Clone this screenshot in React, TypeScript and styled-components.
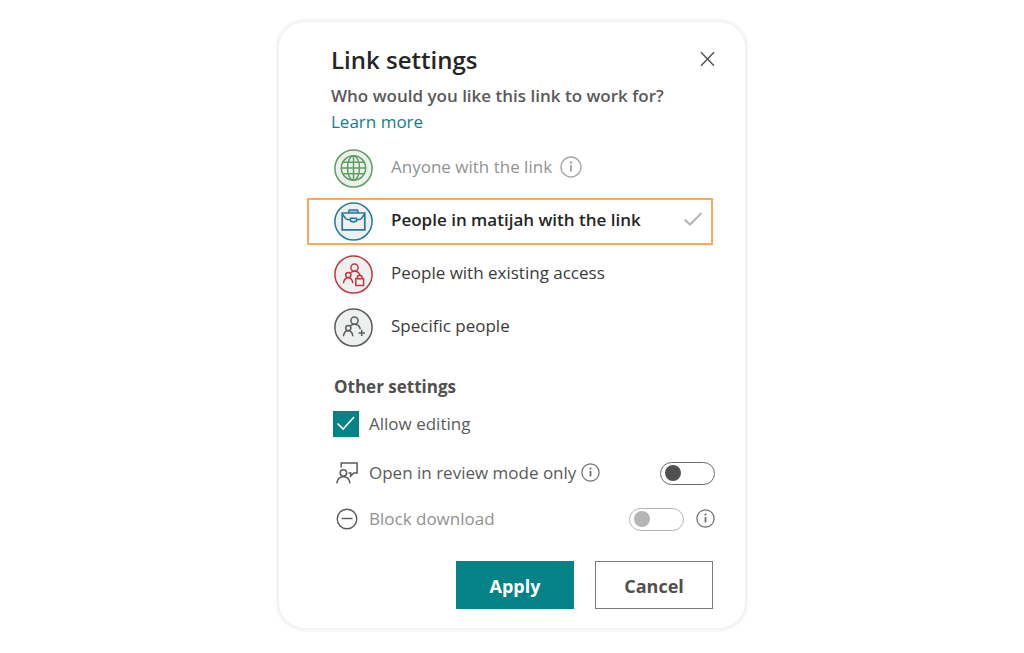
import React, { useState } from "react";
import styled, { createGlobalStyle, css } from "styled-components";

const GlobalStyle = createGlobalStyle`
  *, *::before, *::after { box-sizing: border-box; }
  body {
    margin: 0;
    background: #ffffff;
    color: #3b3b3b;
    font-family: "Open Sans", "Noto Sans", sans-serif;
    font-size: 17px;
    line-height: 26px;
  }
`;

const Page = styled.main`
  display: flex;
  justify-content: center;
  align-items: flex-start;
  padding: 22px 16px;
`;

const Dialog = styled.section`
  width: 100%;
  max-width: 466px;
  padding: 21px 30px 19px 28px;
  border-radius: 26px;
  background: #ffffff;
  box-shadow: 0 0 0 2px #f3f3f3, 0 0 3px 3px #f3f3f3;
`;

const Header = styled.header`
  display: flex;
  justify-content: space-between;
  align-items: center;
  padding-left: 24px;
  margin-bottom: 6px;
`;

const Title = styled.h1`
  margin: 0;
  font-size: 24px;
  line-height: 34px;
  font-weight: 600;
  color: #262626;
`;

const CloseButton = styled.button`
  display: flex;
  padding: 0 0 2px;
  border: 0;
  background: none;
  color: #505050;
  cursor: pointer;
`;

const Intro = styled.div`
  padding-left: 24px;
  margin-bottom: 10px;
`;

const Question = styled.p`
  margin: 0;
  font-weight: 600;
  color: #5a5a5a;
`;

const LearnMore = styled.a`
  display: block;
  width: fit-content;
  color: #117f8a;
  text-decoration: none;
`;

const Options = styled.fieldset`
  display: flex;
  flex-direction: column;
  gap: 6px;
  margin: 0 2px 23px 0;
  padding: 0;
  border: 0;
`;

const HiddenRadio = styled.input`
  appearance: none;
  width: 0;
  height: 0;
  margin: 0;
`;

const Option = styled.label<{ $selected: boolean; $muted?: boolean }>`
  display: flex;
  align-items: center;
  height: 47px;
  padding: 0 8px 0 25px;
  border: 2px solid ${(p) => (p.$selected ? "#fba85c" : "transparent")};
  color: ${(p) => (p.$muted ? "#929292" : p.$selected ? "#262626" : "#3b3b3b")};
  font-weight: ${(p) => (p.$selected ? 600 : 400)};
  cursor: pointer;
`;

const OptionText = styled.span`
  margin: 0 8px 0 18px;
  padding-bottom: 3px;
`;

const Tick = styled.span`
  display: flex;
  margin-left: auto;
  padding-bottom: 6px;
  color: #b5b5b5;
`;

const Settings = styled.section`
  padding-left: 26px;
`;

const SettingsTitle = styled.h2`
  margin: 0 0 1px 1px;
  font-size: 17px;
  line-height: 26px;
  font-weight: 700;
  color: #505050;
`;

const SettingRow = styled.div<{ $muted?: boolean; $spaced?: boolean }>`
  display: flex;
  align-items: center;
  min-height: 46px;
  margin-bottom: ${(p) => (p.$spaced ? 3 : 0)}px;
  color: ${(p) => (p.$muted ? "#929292" : "#5a5a5a")};
`;

const Leading = styled.span`
  display: flex;
  justify-content: center;
  width: 28px;
  margin-right: 8px;
  color: #5a5a5a;
`;

const Trailing = styled.span`
  display: flex;
  align-items: center;
  gap: 12px;
  margin-left: auto;
`;

const InfoButton = styled.button<{ $tone: string; $spaced?: boolean }>`
  display: flex;
  padding: 0 0 1px;
  border: 0;
  background: none;
  color: ${(p) => p.$tone};
  margin-left: ${(p) => (p.$spaced ? 5 : 0)}px;
`;

const OptionInfo = styled(InfoButton)`
  padding-bottom: 4px;
`;

const CheckboxBox = styled.span`
  display: grid;
  width: 26px;
  height: 26px;
  margin-right: 10px;

  > * { grid-area: 1 / 1; }
  > svg { pointer-events: none; z-index: 1; }
`;

const Checkbox = styled.input`
  appearance: none;
  width: 26px;
  height: 26px;
  margin: 0;
  border: 1px solid #038387;
  background: #ffffff;

  &:checked { background: #038387; }
`;

const Switch = styled.input`
  appearance: none;
  display: flex;
  align-items: center;
  width: 55px;
  height: 23px;
  margin: 0;
  padding: 0 4px;
  border: 1px solid #6a6a6a;
  border-radius: 12px;
  background: #ffffff;

  &::before {
    content: "";
    width: 16px;
    height: 16px;
    border-radius: 50%;
    background: #505050;
  }

  &:checked { justify-content: flex-end; }

  &:disabled { border-color: #b5b5b5; }
  &:disabled::before { background: #b5b5b5; }
`;

const Actions = styled.footer`
  display: flex;
  justify-content: flex-end;
  gap: 21px;
  margin: 19px 2px 0 0;
`;

const ActionButton = styled.button<{ $primary?: boolean }>`
  width: 118px;
  height: 48px;
  padding: 2px 0 0;
  font-family: inherit;
  font-size: 18px;
  line-height: 26px;
  font-weight: 700;
  cursor: pointer;
  ${(p) =>
    p.$primary
      ? css`
          border: 1px solid #038387;
          background: #038387;
          color: #ffffff;
        `
      : css`
          border: 1px solid #7a7a7a;
          background: #ffffff;
          color: #505050;
        `}
`;

function InfoIcon({ size }: { size: number }) {
  return (
    <svg width={size} height={size} viewBox="0 0 22 22" fill="none" stroke="currentColor" strokeWidth="1.4">
      <circle cx="11" cy="11" r="10" />
      <path d="M11 9.3v6.2" strokeWidth="2" />
      <circle cx="11" cy="6.5" r="1.2" fill="currentColor" stroke="none" />
    </svg>
  );
}

function Badge({ color, children }: { color: string; children: React.ReactNode }) {
  return (
    <svg width="39" height="39" viewBox="0 0 39 39" fill="none" stroke={color} strokeWidth="1.5">
      <circle cx="19.5" cy="19.5" r="18.6" fill="#eef0f0" />
      {children}
    </svg>
  );
}

const GlobeBadge = () => (
  <Badge color="#5c9f5e">
    <circle cx="19.5" cy="19" r="12.2" />
    <ellipse cx="19.5" cy="19" rx="6" ry="12.2" />
    <path d="M19.5 7v24M7.5 19h24M9 13.2h21M9 24.8h21" />
  </Badge>
);

const BriefcaseBadge = () => (
  <Badge color="#27799c">
    <path d="M8.2 11h22.6v16.8H8.2z" strokeWidth="1.7" />
    <path d="M14.8 11V8.9q0-.9.9-.9h7.4q.9 0 .9.9V11" fill="#27799c" fillOpacity=".35" />
    <path d="M8.6 12.2l2.800 4q.8 1.200 2.200 1.300l2.900.2M30.400 12.200l-2.800 4q-.8 1.200-2.200 1.300l-2.900.2" />
    <path d="M16.500 16.300h6v2.700q-3 1.900-6 0z" />
  </Badge>
);

const PeopleStrokes = () => (
  <>
    <circle cx="20.5" cy="12.6" r="3.6" />
    <circle cx="14.3" cy="20" r="2.6" />
    <path d="M9.5 28.3c.3-3.3 2.2-5.6 4.800-5.600s4.200 2.300 4.500 5.600" />
    <path d="M16.600 17.700c1.100-.9 2.400-1.400 3.900-1.400 2.900 0 5 1.700 5.800 4.800" />
  </>
);

const ExistingBadge = () => (
  <Badge color="#c0393f">
    <PeopleStrokes />
    <path d="M23.300 23.800v-1.200a2.400 2.400 0 0 1 4.800 0v1.200" />
    <path d="M21.800 23.800h7.800v6.600h-7.800z" fill="#eef0f0" />
  </Badge>
);

const SpecificBadge = () => (
  <Badge color="#5c5c5c">
    <PeopleStrokes />
    <path d="M27.700 21.700v6.400M24.500 24.900h6.400" />
  </Badge>
);

const options = [
  { id: "anyone", text: "Anyone with the link", icon: <GlobeBadge />, muted: true },
  { id: "org", text: "People in matijah with the link", icon: <BriefcaseBadge /> },
  { id: "existing", text: "People with existing access", icon: <ExistingBadge /> },
  { id: "specific", text: "Specific people", icon: <SpecificBadge /> },
];

export default function App() {
  const [selected, setSelected] = useState("org");
  const [editing, setEditing] = useState(true);
  const [review, setReview] = useState(false);

  return (
    <>
      <GlobalStyle />
      <Page>
        <Dialog role="dialog" aria-labelledby="dialog-title">
          <Header>
            <Title id="dialog-title">Link settings</Title>
            <CloseButton type="button" aria-label="Close">
              <svg width="16" height="18" viewBox="0 0 16 18" fill="none" stroke="currentColor" strokeWidth="1.4">
                <path d="M2 2.3l13 13.4M15 2.3L2 15.7" />
              </svg>
            </CloseButton>
          </Header>
          <Intro>
            <Question id="question">Who would you like this link to work for?</Question>
            <LearnMore href="#learn-more">Learn more</LearnMore>
          </Intro>
          <Options aria-labelledby="question">
            {options.map((o) => (
              <Option key={o.id} $selected={selected === o.id} $muted={o.muted}>
                <HiddenRadio
                  type="radio"
                  name="audience"
                  disabled={o.muted}
                  checked={selected === o.id}
                  onChange={() => setSelected(o.id)}
                />
                {o.icon}
                <OptionText>{o.text}</OptionText>
                {o.muted && (
                  <OptionInfo type="button" aria-label="About this option" $tone="#a8a8a8">
                    <InfoIcon size={22} />
                  </OptionInfo>
                )}
                {selected === o.id && (
                  <Tick>
                    <svg width="20" height="16" viewBox="0 0 20 16" fill="none" stroke="currentColor" strokeWidth="2">
                      <path d="M1.5 8.5l5.500 5L18.500 2" />
                    </svg>
                  </Tick>
                )}
              </Option>
            ))}
          </Options>
          <Settings>
            <SettingsTitle>Other settings</SettingsTitle>
            <SettingRow $spaced>
              <CheckboxBox>
                <Checkbox
                  id="editing"
                  type="checkbox"
                  checked={editing}
                  onChange={(e) => setEditing(e.target.checked)}
                />
                <svg width="26" height="26" viewBox="0 0 26 26" fill="none" stroke="#ffffff" strokeWidth="1.7">
                  <path d="M4.5 12.500l5.700 5.500L21 6" />
                </svg>
              </CheckboxBox>
              <label htmlFor="editing">Allow editing</label>
            </SettingRow>
            <SettingRow>
              <Leading>
                <svg width="24" height="24" viewBox="0 0 24 24" fill="none" stroke="currentColor" strokeWidth="1.5">
                  <path d="M6.200 6.500V1.900h15.900v10.100h-3.300l-3.100 2.900v-2.900h-2.200" />
                  <circle cx="8.4" cy="12" r="3.2" />
                  <path d="M1.800 22.300c.6-4.200 3.200-6.600 6.600-6.600s6 2.400 6.600 6.600" />
                </svg>
              </Leading>
              <label htmlFor="review">Open in review mode only</label>
              <InfoButton type="button" aria-label="About review mode" $tone="#6a6a6a" $spaced>
                <InfoIcon size={19} />
              </InfoButton>
              <Trailing>
                <Switch
                  id="review"
                  type="checkbox"
                  role="switch"
                  checked={review}
                  onChange={(e) => setReview(e.target.checked)}
                />
              </Trailing>
            </SettingRow>
            <SettingRow $muted>
              <Leading>
                <svg width="22" height="22" viewBox="0 0 22 22" fill="none" stroke="currentColor" strokeWidth="1.4">
                  <circle cx="11" cy="11" r="9.8" />
                  <path d="M5.500 10.500h11" />
                </svg>
              </Leading>
              <label htmlFor="block">Block download</label>
              <Trailing>
                <Switch id="block" type="checkbox" role="switch" disabled />
                <InfoButton type="button" aria-label="About blocking downloads" $tone="#6a6a6a">
                  <InfoIcon size={19} />
                </InfoButton>
              </Trailing>
            </SettingRow>
          </Settings>
          <Actions>
            <ActionButton type="button" $primary>Apply</ActionButton>
            <ActionButton type="button">Cancel</ActionButton>
          </Actions>
        </Dialog>
      </Page>
    </>
  );
}
